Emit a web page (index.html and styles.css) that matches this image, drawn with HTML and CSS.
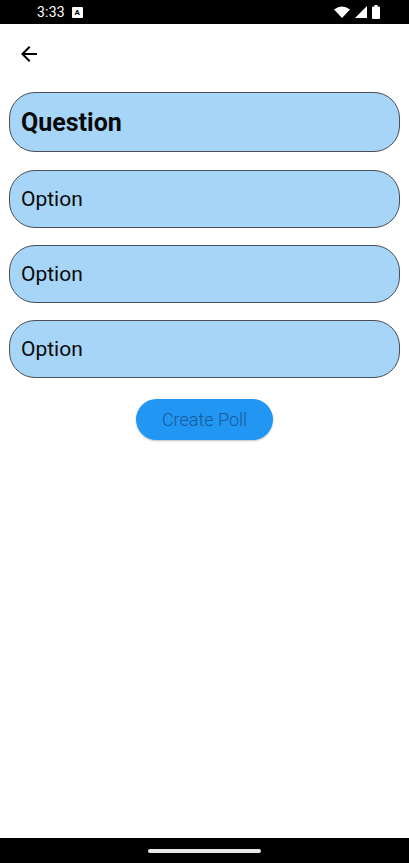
FILE: index.html
```html
<!DOCTYPE html>
<html>
<head>
<meta charset="utf-8">
<link rel="stylesheet" href="styles.css">
</head>
<body>
<div class="screen">
  <div class="status">
    <div class="status-left">
      <span class="time">3:33</span>
      <span class="a-icon">A</span>
    </div>
    <div class="status-right">
      <svg width="16" height="12" viewBox="0 0 16 12"><path d="M0 3.6 Q8 -2.4 16 3.6 L8 12 Z" fill="#fff"/></svg>
      <svg width="12" height="12" viewBox="0 0 12 12"><path d="M12 0 L12 12 L0 12 Z" fill="#fff"/></svg>
      <svg width="8" height="14" viewBox="0 0 8 14"><rect x="2.5" y="0" width="3" height="2" fill="#fff"/><rect x="0" y="1.5" width="8" height="12.5" rx="1" fill="#fff"/></svg>
    </div>
  </div>
  <div class="toolbar">
    <svg class="back" width="24" height="24" viewBox="0 0 24 24"><path d="M20 11H7.83l5.59-5.59L12 4l-8 8 8 8 1.41-1.41L7.83 13H20v-2z" fill="#000"/></svg>
  </div>
  <div class="form">
    <div class="field question">Question</div>
    <div class="field option">Option</div>
    <div class="field option">Option</div>
    <div class="field option">Option</div>
    <div class="actions">
      <button class="create">Create Poll</button>
    </div>
  </div>
  <div class="spacer"></div>
  <div class="navbar"><div class="pill"></div></div>
</div>
</body>
</html>
```
FILE: styles.css
```css
* { box-sizing: border-box; }
html, body { margin: 0; padding: 0; }
body { background: #fff; font-family: Roboto, "Liberation Sans", sans-serif; }
.screen { width: 409px; height: 863px; display: flex; flex-direction: column; }
.status { height: 24px; background: #000; display: flex; justify-content: space-between; align-items: center; padding: 0 29px 0 37px; flex: none; }
.status-left { display: flex; align-items: center; gap: 7px; }
.time { color: #fff; font-size: 14px; letter-spacing: 0.2px; }
.a-icon { width: 11px; height: 11px; background: #fff; color: #000; font-size: 8px; font-weight: bold; display: flex; align-items: center; justify-content: center; border-radius: 1px; }
.status-right { display: flex; align-items: center; gap: 5px; }
.toolbar { height: 60px; display: flex; align-items: center; padding-left: 17px; flex: none; }
.form { padding: 8px 9px 0 9px; display: flex; flex-direction: column; gap: 17px; }
.field { background: #a6d5f7; border: 1px solid #4a4f57; border-radius: 26px; display: flex; align-items: center; padding-left: 11px; color: #0a0a0a; }
.question { height: 60px; font-size: 25px; font-weight: bold; margin-bottom: 1px; }
.option { height: 58px; font-size: 21px; }
.actions { display: flex; justify-content: center; margin-top: 4px; }
.create { width: 137px; height: 41px; border: none; border-radius: 21px; background: #2196f3; color: #1a5a98; font-family: Roboto, "Liberation Sans", sans-serif; font-size: 18px; font-weight: 300; box-shadow: 0 1px 2px rgba(0,0,0,0.25); padding: 0; }
.spacer { flex: 1; }
.navbar { height: 25px; background: #000; display: flex; justify-content: center; align-items: center; flex: none; }
.pill { width: 113px; height: 4px; background: #e8e8e8; border-radius: 2px; }
```
